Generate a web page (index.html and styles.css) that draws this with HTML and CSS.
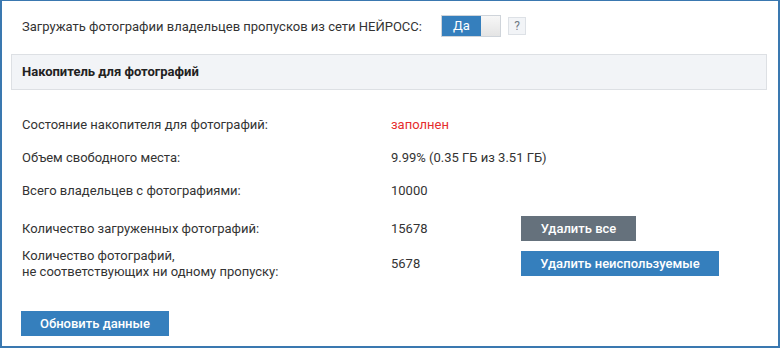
FILE: index.html
```html
<!DOCTYPE html>
<html lang="ru">
<head>
  <meta charset="UTF-8" />
  <title>Накопитель для фотографий</title>
  <link rel="stylesheet" href="styles.css">
</head>
<body>
  <div class="panel">
    <div class="option-row">
      <span class="option-label">Загружать фотографии владельцев пропусков из сети НЕЙРОСС:</span>
      <div class="toggle">
        <span class="toggle-on">Да</span>
        <span class="toggle-knob"></span>
      </div>
      <span class="help">?</span>
    </div>

    <div class="section-header">Накопитель для фотографий</div>

    <div class="stats">
      <div class="stat-row">
        <div class="stat-label">Состояние накопителя для фотографий:</div>
        <div class="stat-value danger">заполнен</div>
      </div>
      <div class="stat-row">
        <div class="stat-label">Объем свободного места:</div>
        <div class="stat-value">9.99% (0.35 ГБ из 3.51 ГБ)</div>
      </div>
      <div class="stat-row">
        <div class="stat-label">Всего владельцев с фотографиями:</div>
        <div class="stat-value">10000</div>
      </div>
      <div class="stat-row btn-row">
        <div class="stat-label">Количество загруженных фотографий:</div>
        <div class="stat-value">15678</div>
        <button type="button" class="btn btn-grey">Удалить все</button>
      </div>
      <div class="stat-row btn-row second">
        <div class="stat-label">Количество фотографий,<br>не соответствующих ни одному пропуску:</div>
        <div class="stat-value">5678</div>
        <button type="button" class="btn btn-blue">Удалить неиспользуемые</button>
      </div>
    </div>

    <button type="button" class="btn btn-blue refresh">Обновить данные</button>
  </div>
</body>
</html>
```

FILE: styles.css
```css
* {
  box-sizing: border-box;
}
body {
  margin: 0;
  font-family: Roboto, "Liberation Sans", Arial, sans-serif;
  font-size: 13px;
  color: #333;
  background: #fff;
}
.panel {
  width: 780px;
  height: 348px;
  border: 2px solid #3a78b0;
  border-top-width: 1px;
  padding: 0 11px 0 9px;
}
.option-row {
  display: flex;
  align-items: center;
  height: 24px;
  margin-top: 13px;
  padding-left: 11px;
}
.option-label {
  flex: none;
  width: 419px;
}
.toggle {
  display: flex;
  width: 60px;
  height: 22px;
  border: 1px solid #cfd4da;
}
.toggle-on {
  width: 39px;
  background: #357fbd;
  color: #fff;
  text-align: center;
  line-height: 20px;
}
.toggle-knob {
  flex: 1;
  background: linear-gradient(#f7f7f7, #e4e4e4);
}
.help {
  width: 18px;
  height: 18px;
  margin-left: 7px;
  border: 1px solid #dde1e6;
  background: #f2f4f7;
  color: #6f7a85;
  font-size: 12px;
  line-height: 16px;
  text-align: center;
}
.section-header {
  margin-top: 16px;
  height: 36px;
  line-height: 34px;
  padding-left: 10px;
  background: #f2f4f7;
  border: 1px solid #dde0e4;
  font-weight: bold;
  color: #222;
}
.stats {
  margin-top: 18px;
  padding-left: 11px;
}
.stat-row {
  display: flex;
  align-items: center;
  height: 33px;
}
.stat-label {
  flex: none;
  width: 369px;
  line-height: 16px;
}
.stat-value {
  flex: none;
  width: 130px;
  white-space: nowrap;
}
.danger {
  color: #e52d2d;
}
.btn-row {
  height: 25px;
  margin-top: 9px;
}
.btn-row.second {
  margin-top: 10px;
}
.btn {
  flex: none;
  height: 25px;
  border: none;
  padding: 0;
  font-family: inherit;
  font-size: 13px;
  font-weight: 500;
  color: #fff;
  white-space: nowrap;
  cursor: pointer;
}
.btn-grey {
  width: 115px;
  background: #65717c;
}
.btn-blue {
  background: #357fbd;
}
.btn-row .btn-blue {
  width: 198px;
}
.refresh {
  display: block;
  width: 148px;
  margin: 35px 0 0 10px;
}
```
